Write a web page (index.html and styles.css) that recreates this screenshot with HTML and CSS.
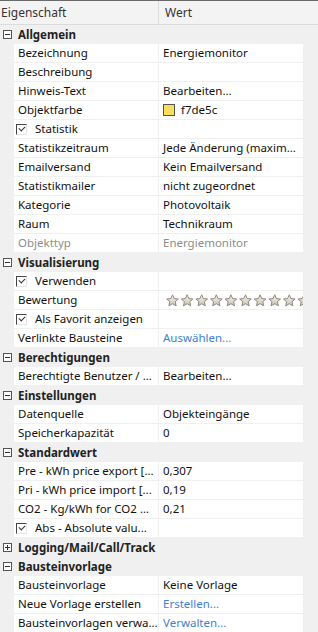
FILE: index.html
```html
<!DOCTYPE html>
<html lang="de">
<head>
    <meta charset="UTF-8">
    <meta name="viewport" content="width=device-width, initial-scale=1.0">
    <title>Eigenschaften</title>
    <link rel="stylesheet" href="styles.css">
</head>
<body>
    <svg width="0" height="0" class="defs">
        <defs>
            <linearGradient id="starfill" x1="0" y1="0" x2="0" y2="1">
                <stop offset="0" stop-color="#f4f2ee"/>
                <stop offset="1" stop-color="#cbc5b9"/>
            </linearGradient>
            <path id="star" d="M6.5 0.8 L8.2 4.6 L12.3 5 L9.2 7.7 L10.1 11.8 L6.5 9.7 L2.9 11.8 L3.8 7.7 L0.7 5 L4.8 4.6 Z"/>
        </defs>
    </svg>

    <div class="grid">
        <div class="head">
            <div class="head-name">Eigenschaft</div>
            <div class="head-value">Wert</div>
        </div>

        <div class="cat"><span class="toggle minus"></span>Allgemein</div>
        <div class="row"><div class="name">Bezeichnung</div><div class="value">Energiemonitor</div></div>
        <div class="row"><div class="name">Beschreibung</div><div class="value"></div></div>
        <div class="row"><div class="name">Hinweis-Text</div><div class="value">Bearbeiten...</div></div>
        <div class="row"><div class="name">Objektfarbe</div><div class="value"><span class="swatch"></span>f7de5c</div></div>
        <div class="row"><div class="name"><span class="check"></span>Statistik</div><div class="value"></div></div>
        <div class="row"><div class="name">Statistikzeitraum</div><div class="value">Jede Änderung (maxim...</div></div>
        <div class="row"><div class="name">Emailversand</div><div class="value">Kein Emailversand</div></div>
        <div class="row"><div class="name">Statistikmailer</div><div class="value">nicht zugeordnet</div></div>
        <div class="row"><div class="name">Kategorie</div><div class="value">Photovoltaik</div></div>
        <div class="row"><div class="name">Raum</div><div class="value">Technikraum</div></div>
        <div class="row readonly"><div class="name">Objekttyp</div><div class="value">Energiemonitor</div></div>

        <div class="cat"><span class="toggle minus"></span>Visualisierung</div>
        <div class="row"><div class="name"><span class="check"></span>Verwenden</div><div class="value"></div></div>
        <div class="row"><div class="name">Bewertung</div>
            <div class="value stars">
                <svg width="150" height="13" viewBox="0 0 150 13">
                    <use href="#star" x="0"/><use href="#star" x="14.6"/><use href="#star" x="29.2"/>
                    <use href="#star" x="43.8"/><use href="#star" x="58.4"/><use href="#star" x="73"/>
                    <use href="#star" x="87.6"/><use href="#star" x="102.2"/><use href="#star" x="116.8"/>
                    <use href="#star" x="131.4"/>
                </svg>
            </div>
        </div>
        <div class="row"><div class="name"><span class="check"></span>Als Favorit anzeigen</div><div class="value"></div></div>
        <div class="row"><div class="name">Verlinkte Bausteine</div><div class="value link">Auswählen...</div></div>

        <div class="cat"><span class="toggle minus"></span>Berechtigungen</div>
        <div class="row"><div class="name">Berechtigte Benutzer / ...</div><div class="value">Bearbeiten...</div></div>

        <div class="cat"><span class="toggle minus"></span>Einstellungen</div>
        <div class="row"><div class="name">Datenquelle</div><div class="value">Objekteingänge</div></div>
        <div class="row"><div class="name">Speicherkapazität</div><div class="value">0</div></div>

        <div class="cat"><span class="toggle minus"></span>Standardwert</div>
        <div class="row"><div class="name">Pre - kWh price export [...</div><div class="value">0,307</div></div>
        <div class="row"><div class="name">Pri - kWh price import [...</div><div class="value">0,19</div></div>
        <div class="row"><div class="name">CO2 - Kg/kWh for CO2 ...</div><div class="value">0,21</div></div>
        <div class="row"><div class="name"><span class="check"></span>Abs - Absolute valu...</div><div class="value"></div></div>

        <div class="cat"><span class="toggle plus"></span>Logging/Mail/Call/Track</div>

        <div class="cat"><span class="toggle minus"></span>Bausteinvorlage</div>
        <div class="row"><div class="name">Bausteinvorlage</div><div class="value">Keine Vorlage</div></div>
        <div class="row"><div class="name">Neue Vorlage erstellen</div><div class="value link">Erstellen...</div></div>
        <div class="row"><div class="name">Bausteinvorlagen verwa...</div><div class="value link">Verwalten...</div></div>
    </div>
</body>
</html>
```

FILE: styles.css
```css
body {
    margin: 0;
    padding: 0;
    background-color: #f0f0f0;
    font-family: "Noto Sans", "Open Sans", sans-serif;
    font-size: 11.5px;
    color: #111;
    overflow: hidden;
}
.defs {
    position: absolute;
}
.grid {
    width: 318px;
    border-top: 1px solid #6b6b6b;
}
.head {
    display: flex;
    height: 23px;
    background-color: #f3f3f3;
    border-bottom: 1px solid #dcdcdc;
    color: #333;
    font-size: 12px;
}
.head-name {
    width: 157px;
    padding-left: 1px;
    border-right: 1px solid #dcdcdc;
    line-height: 23px;
}
.head-value {
    padding-left: 6px;
    line-height: 23px;
}
.cat {
    display: flex;
    align-items: center;
    height: 19px;
    font-weight: bold;
    color: #222;
}
.toggle {
    width: 7px;
    height: 7px;
    border: 1px solid #555;
    margin: 0 6px 0 3px;
    position: relative;
    background-color: #fff;
}
.toggle::before {
    content: "";
    position: absolute;
    left: 1px;
    top: 3px;
    width: 5px;
    height: 1px;
    background-color: #333;
}
.plus::after {
    content: "";
    position: absolute;
    left: 3px;
    top: 1px;
    width: 1px;
    height: 5px;
    background-color: #333;
}
.row {
    display: flex;
    height: 19px;
    margin-left: 14px;
    width: 289px;
    background-color: #fff;
    box-sizing: border-box;
    border-bottom: 1px solid #f0f0f0;
}
.name {
    width: 140px;
    padding-left: 4px;
    border-right: 1px solid #f0f0f0;
    line-height: 18px;
    white-space: nowrap;
    overflow: hidden;
    display: flex;
    align-items: center;
}
.value {
    flex: 1;
    padding-left: 4px;
    line-height: 18px;
    white-space: nowrap;
    overflow: hidden;
    display: flex;
    align-items: center;
}
.readonly {
    color: #8c8c8c;
}
.link {
    color: #3d7fd6;
}
.swatch {
    width: 10px;
    height: 10px;
    border: 1px solid #555;
    background-color: #f7de5c;
    margin-right: 6px;
}
.check {
    width: 9px;
    height: 9px;
    border-left: 1px solid #444;
    border-top: 1px solid #444;
    border-right: 1px solid #e6e6e6;
    border-bottom: 1px solid #e6e6e6;
    margin: 0 8px 0 -2px;
    position: relative;
}
.check::after {
    content: "";
    position: absolute;
    left: 2px;
    top: 1px;
    width: 5px;
    height: 3px;
    border-left: 1px solid #333;
    border-bottom: 1px solid #333;
    transform: rotate(-45deg);
}
.stars svg {
    flex: none;
    fill: url(#starfill);
    stroke: #8e887c;
    stroke-width: 1;
    margin-left: 3px;
}
```
